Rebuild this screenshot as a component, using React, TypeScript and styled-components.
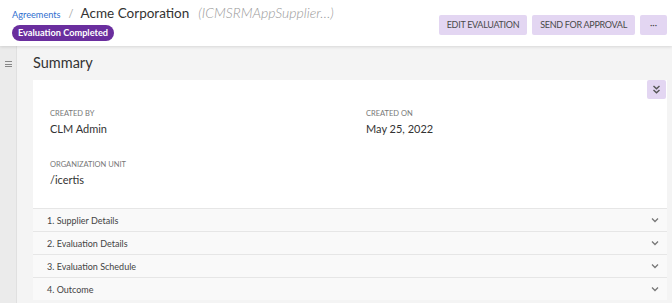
import React from "react";
import styled, { createGlobalStyle } from "styled-components";

const GlobalStyle = createGlobalStyle`
  html, body {
    margin: 0;
    padding: 0;
    background: #f4f4f4;
    font-family: "Lato", "Open Sans", sans-serif;
    color: #333;
  }
  * { box-sizing: border-box; }
`;

const sections = [
  "1. Supplier Details",
  "2. Evaluation Details",
  "3. Evaluation Schedule",
  "4. Outcome",
];

const ChevronDown = () => (
  <svg width="8" height="6" viewBox="0 0 8 6">
    <path d="M1 1.5l3 3 3-3" fill="none" stroke="#777" strokeWidth="1.3" />
  </svg>
);

const DoubleChevron = () => (
  <svg width="9" height="9" viewBox="0 0 9 9">
    <path d="M1.5 1l3 2.8 3-2.8M1.5 5l3 2.8 3-2.8" fill="none" stroke="#555" strokeWidth="1.4" />
  </svg>
);

const App = () => {
  return (
    <>
      <GlobalStyle />
      <Page>
        <Header>
          <TitleBlock>
            <Breadcrumb>
              <Crumb>Agreements</Crumb>
              <Slash>/</Slash>
              <Title>Acme Corporation</Title>
              <SubTitle>(ICMSRMAppSupplier…)</SubTitle>
            </Breadcrumb>
            <Badge>Evaluation Completed</Badge>
          </TitleBlock>
          <Actions>
            <ActionButton>EDIT EVALUATION</ActionButton>
            <ActionButton>SEND FOR APPROVAL</ActionButton>
            <ActionButton $narrow>···</ActionButton>
          </Actions>
        </Header>
        <Body>
          <Sidebar>
            <Hamburger>
              <span />
              <span />
              <span />
            </Hamburger>
          </Sidebar>
          <Main>
            <SectionTitle>Summary</SectionTitle>
            <Card>
              <ExpandButton>
                <DoubleChevron />
              </ExpandButton>
              <Fields>
                <Field>
                  <Label>CREATED BY</Label>
                  <Value>CLM Admin</Value>
                </Field>
                <Field>
                  <Label>CREATED ON</Label>
                  <Value>May 25, 2022</Value>
                </Field>
                <Field>
                  <Label>ORGANIZATION UNIT</Label>
                  <Value>/icertis</Value>
                </Field>
              </Fields>
              {sections.map((s) => (
                <AccordionRow key={s}>
                  <span>{s}</span>
                  <ChevronDown />
                </AccordionRow>
              ))}
            </Card>
          </Main>
        </Body>
      </Page>
    </>
  );
};

export default App;

const Page = styled.div`
  width: 672px;
  height: 303px;
  overflow: hidden;
  display: flex;
  flex-direction: column;
`;

const Header = styled.div`
  height: 46px;
  background: #fff;
  display: flex;
  justify-content: space-between;
  align-items: flex-start;
  padding: 0 5px 0 12px;
  box-shadow: 0 1px 3px rgba(0, 0, 0, 0.12);
  position: relative;
  z-index: 1;
`;

const TitleBlock = styled.div`
  display: flex;
  flex-direction: column;
  padding-top: 4px;
`;

const Breadcrumb = styled.div`
  display: flex;
  align-items: baseline;
  height: 19px;
`;

const Crumb = styled.span`
  font-size: 9.2px;
  color: #2f6fcf;
`;

const Slash = styled.span`
  font-size: 11px;
  color: #aaa;
  margin: 0 7px 0 8px;
`;

const Title = styled.span`
  font-size: 13.5px;
  color: #333;
`;

const SubTitle = styled.span`
  font-size: 14px;
  font-style: italic;
  font-weight: 300;
  color: #999;
  margin-left: 9px;
`;

const Badge = styled.span`
  align-self: flex-start;
  margin-top: 2px;
  height: 16px;
  padding: 0 6px;
  border-radius: 8px;
  background: #6a2e9e;
  color: #fff;
  font-size: 9.2px;
  font-weight: 700;
  line-height: 16px;
`;

const Actions = styled.div`
  display: flex;
  gap: 5px;
  margin-top: 15px;
`;

const ActionButton = styled.div<{ $narrow?: boolean }>`
  height: 20px;
  padding: 0 ${(p) => (p.$narrow ? "10px" : "8px")};
  background: #e3d6f2;
  border-radius: 2px;
  color: #4a4a4a;
  font-size: 9px;
  line-height: 20px;
  letter-spacing: ${(p) => (p.$narrow ? "0" : "-0.3px")};
`;

const Body = styled.div`
  flex: 1;
  display: flex;
`;

const Sidebar = styled.div`
  width: 17px;
  background: #ebebeb;
  border-right: 1px solid #e0e0e0;
  padding-top: 15px;
  display: flex;
  justify-content: center;
`;

const Hamburger = styled.div`
  display: flex;
  flex-direction: column;
  gap: 1.5px;
  width: 7px;
  height: 7px;
  span {
    display: block;
    height: 1px;
    background: #888;
  }
`;

const Main = styled.div`
  flex: 1;
  padding: 0 5px 0 16px;
`;

const SectionTitle = styled.div`
  height: 34px;
  font-size: 14.5px;
  line-height: 34px;
  color: #333;
`;

const Card = styled.div`
  position: relative;
  background: #fff;
`;

const ExpandButton = styled.div`
  position: absolute;
  top: 0;
  right: 1px;
  width: 19px;
  height: 19px;
  background: #e3d6f2;
  border-radius: 2px;
  display: flex;
  align-items: center;
  justify-content: center;
`;

const Fields = styled.div`
  display: grid;
  grid-template-columns: 316px 1fr;
  row-gap: 24px;
  padding: 29px 17px 21px;
`;

const Field = styled.div`
  display: flex;
  flex-direction: column;
`;

const Label = styled.div`
  font-size: 7.5px;
  color: #777;
  line-height: 10px;
  margin-bottom: 2px;
`;

const Value = styled.div`
  font-size: 11px;
  color: #333;
  line-height: 15px;
`;

const AccordionRow = styled.div`
  height: 23px;
  background: #f9f9f9;
  border-top: 1px solid #e6e6e6;
  display: flex;
  align-items: center;
  justify-content: space-between;
  padding: 0 8px 0 14px;
  font-size: 9px;
  color: #444;
`;
